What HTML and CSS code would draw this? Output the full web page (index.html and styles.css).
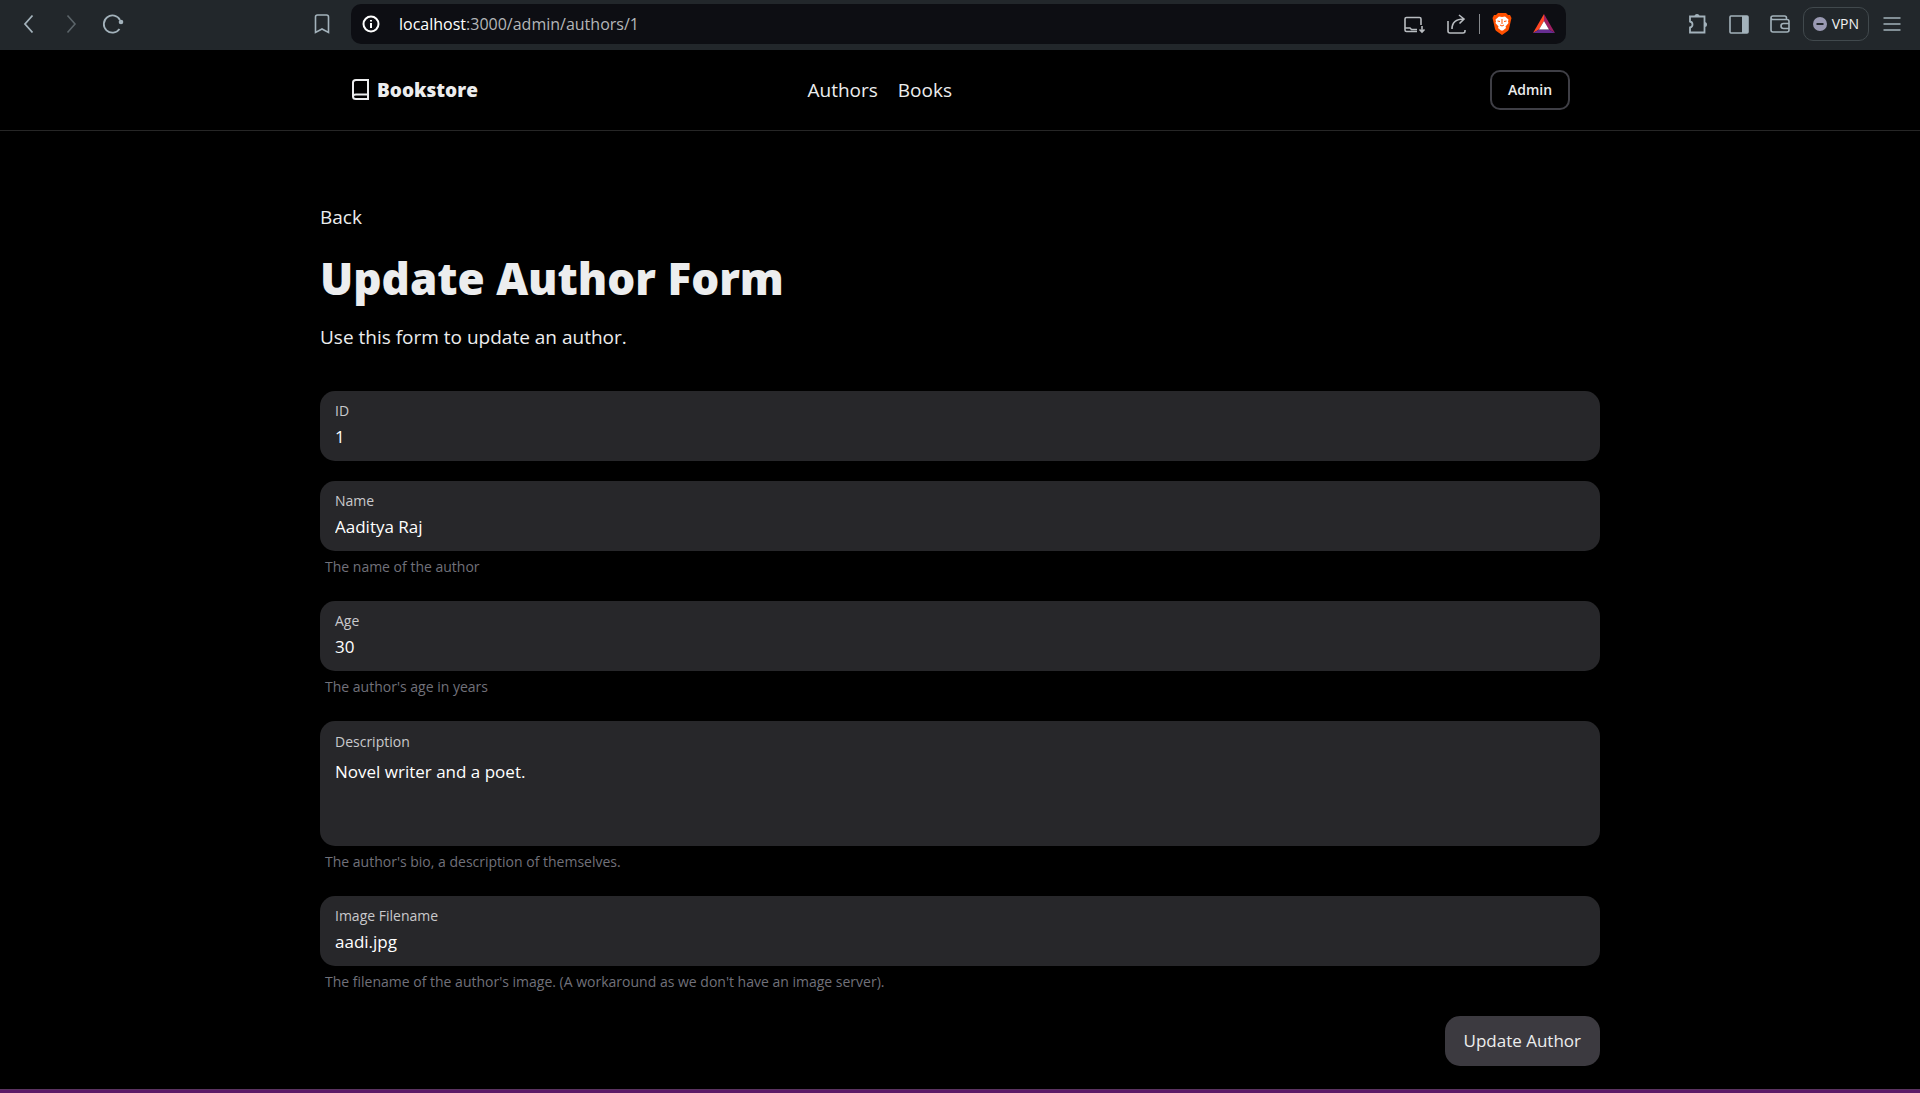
FILE: index.html
```html
<!DOCTYPE html>
<html lang="en">
<head>
<meta charset="utf-8">
<title>Update Author | Bookstore</title>
<link rel="stylesheet" href="styles.css">
</head>
<body>
<div class="toolbar">
  <div class="tools tools-left">
    <button class="tool" aria-label="Back"><svg width="24" height="24" viewBox="0 0 24 24" stroke-width="1.8"><path d="M15.500 3.500 8 12l7.500 8.500"/></svg></button>
    <button class="tool tool-off" aria-label="Forward"><svg width="24" height="24" viewBox="0 0 24 24" stroke-width="1.600"><path d="M8.500 3.500 16 12l-7.500 8.500"/></svg></button>
    <button class="tool" aria-label="Reload"><svg width="24" height="24" viewBox="0 0 24 24" stroke-width="1.800"><path d="M18.500 17a8.600 8.600 0 1 1 .5-9"/><circle class="fill" cx="20" cy="10" r="2.300"/></svg></button>
    <button class="tool tool-end" aria-label="Bookmark"><svg width="24" height="24" viewBox="0 0 24 24" stroke-width="1.600"><path d="M5.500 20.500V5q0-2 2-2h9q2 0 2 2v15.500L12 17z"/></svg></button>
  </div>
  <div class="address">
    <svg class="info" width="20" height="20" viewBox="0 0 20 20"><circle cx="10" cy="10" r="7.500"/><path d="M10 9v5M10 6v1.500"/></svg>
    <span class="url"><span class="host">localhost</span>:3000/admin/authors/1</span>
    <button class="tool light" aria-label="Install"><svg width="24" height="24" viewBox="0 0 24 24" stroke-width="1.600"><path d="M14 19.500H3.500q-1.500 0-1.500-1.500V7q0-1.500 1.500-1.500h13Q18 5.500 18 7v6M2 16h5l1.500 1.500H14M19 14v6M16.500 17.500 19 20l2.500-2.500"/></svg></button>
    <button class="tool light" aria-label="Share"><svg width="24" height="24" viewBox="0 0 24 24" stroke-width="1.600"><path d="M3 9v10q0 2 2 2h13q2 0 2-2v-1M7 17c0-6 4-10 12-10M14 3l5 4-4.500 4.500"/></svg></button>
    <span class="divider"></span>
    <button class="tool" aria-label="Shields"><svg width="24" height="24" viewBox="0 0 24 24"><path class="shield" d="m8 1h8l2 2h2l1.500 3-.5 2-2 9q-.5 1.500-2 2.500l-5 3.500-5-3.500q-1.500-1-2-2.500L3 8l-.5-2L4 3h2z"/><path class="lion" d="m12 5 3-.5 3.500 3-.5 2 .5 1.500-3 3.500.5 1.500-3 2.500h-2L8 16l.5-1.500-3-3.500.5-1.500-.5-2 3.500-3z"/><path class="mane" d="m7.500 9 2.500.5M16.500 9l-2.500.5M12 7v5M10 13l2 1 2-1"/></svg></button>
    <button class="tool" aria-label="Rewards"><svg width="24" height="24" viewBox="0 0 24 24"><path fill="#ff4724" stroke="none" d="M12 2 1 21l6-3.500L12 9z"/><path fill="#9e1f63" stroke="none" d="m12 2 11 19-6-3.500L12 9z"/><path fill="#662d91" stroke="none" d="m1 21 6-3.500h10l6 3.500z"/><path fill="#fff" stroke="none" d="m12 9 5 8.500H7z"/></svg></button>
  </div>
  <div class="tools tools-right">
    <button class="tool" aria-label="Extensions"><svg width="24" height="24" viewBox="0 0 24 24" stroke-width="1.800"><path d="M4 4.500h14.500v16H4v-5q2.500-.5 2.500-3T4 9.500z"/><path class="fill" d="M8.500 4.500a2.500 2.500 0 0 1 5 0zM18.500 10a2.500 2.500 0 0 1 0 5z"/></svg></button>
    <button class="tool" aria-label="Sidebar"><svg width="24" height="24" viewBox="0 0 24 24" stroke-width="1.600"><rect x="3" y="4" width="18" height="17" rx="1"/><path class="fill" d="M15 4h6v17h-6z"/></svg></button>
    <button class="tool" aria-label="Wallet"><svg width="24" height="24" viewBox="0 0 24 24" stroke-width="1.600"><path d="M18.500 7V6q0-2-2-2H5Q3 4 3 6v12q0 2 2 2h14q2 0 2-2V9.500q0-2-2-2H5q-2 0-2-1.500M21 11.500h-5.500a2.500 2.500 0 0 0 0 5H21"/></svg></button>
    <button class="vpn"><svg width="14" height="14" viewBox="0 0 14 14"><circle cx="7" cy="7" r="7"/><path d="M3.500 7h7"/></svg>VPN</button>
    <button class="tool" aria-label="Menu"><svg width="24" height="24" viewBox="0 0 24 24" stroke-width="1.600"><path d="M3.500 6h17M3.500 12h17M3.500 18h17"/></svg></button>
  </div>
</div>
<header class="site-header">
  <nav class="nav">
    <a class="brand" href="#"><svg width="20" height="24" viewBox="0 0 20 24"><path d="M6 2h12v19H6q-3 0-3-2.500V4.500Q3 2 6 2zM3 18.500q0-2 3-2h12"/></svg>Bookstore</a>
    <div class="links"><a href="#">Authors</a><a href="#">Books</a></div>
    <button class="admin">Admin</button>
  </nav>
</header>
<main class="page">
  <a class="back" href="#">Back</a>
  <h1>Update Author Form</h1>
  <p class="intro">Use this form to update an author.</p>
  <form class="form">
    <div class="group">
      <div class="field"><label for="id">ID</label><input id="id" value="1" readonly></div>
    </div>
    <div class="group">
      <div class="field"><label for="name">Name</label><input id="name" value="Aaditya Raj"></div>
      <p class="hint">The name of the author</p>
    </div>
    <div class="group">
      <div class="field"><label for="age">Age</label><input id="age" value="30"></div>
      <p class="hint">The author's age in years</p>
    </div>
    <div class="group">
      <div class="field area"><label for="bio">Description</label><textarea id="bio" rows="2">Novel writer and a poet.</textarea></div>
      <p class="hint">The author's bio, a description of themselves.</p>
    </div>
    <div class="group">
      <div class="field"><label for="image">Image Filename</label><input id="image" value="aadi.jpg"></div>
      <p class="hint">The filename of the author's image. (A workaround as we don't have an image server).</p>
    </div>
    <button class="submit" type="button">Update Author</button>
  </form>
</main>
<footer class="edge"></footer>
</body>
</html>
```
FILE: styles.css
```css
* { box-sizing: border-box; }
body {
  margin: 0;
  min-height: 100vh;
  display: flex;
  flex-direction: column;
  background: #000;
  color: #ecedee;
  font-family: "Open Sans", "Noto Sans", sans-serif;
  font-size: 19px;
  line-height: 30px;
}
button, input, textarea { font: inherit; color: inherit; }
button { background: none; border: 0; padding: 0; }
a { color: inherit; text-decoration: none; }
h1, p { margin: 0; }
svg { display: block; flex: none; }

.toolbar {
  display: grid;
  grid-template-columns: minmax(0, 351fr) minmax(0, 1215fr) minmax(0, 354fr);
  align-items: center;
  height: 50px;
  padding-bottom: 2px;
  background: #22272b;
  color: #a3b2bb;
}
.tools { display: flex; align-items: center; }
.tools-left { gap: 18px; padding: 0 17px; }
.tools-right { justify-content: flex-end; gap: 17px; padding-right: 16px; }
.tool svg { fill: none; stroke: currentColor; }
.tool .fill { fill: currentColor; stroke: none; }
.tool-off { color: #5b6469; }
.tool-end { margin-left: auto; }
.light { color: #b8bcc0; }
.address {
  display: flex;
  align-items: center;
  gap: 18px;
  height: 40px;
  padding: 0 10px;
  border-radius: 10px;
  background: #0d0e13;
}
.info { fill: none; stroke: #fff; stroke-width: 2; }
.url { flex: 1; font-size: 16px; color: #b4b6b9; }
.host { color: #fff; }
.divider { width: 1px; height: 20px; margin: 0 -8px; background: #85888c; }
.tool .shield { fill: #ff5000; stroke: none; }
.tool .lion { fill: #fff; stroke: none; }
.tool .mane { stroke: #ff5000; stroke-width: 1; }
.vpn {
  display: flex;
  align-items: center;
  gap: 5px;
  height: 34px;
  margin: 0 -6px;
  padding: 0 9px;
  border: 1px solid #41494d;
  border-radius: 10px;
  font-size: 14px;
  color: #f0f1f2;
}
.vpn svg { fill: #9a9ab3; }
.vpn path { stroke: #22272b; stroke-width: 2; }

.site-header { border-bottom: 1px solid #262626; }
.nav {
  display: grid;
  grid-template-columns: 3fr 3fr 2fr;
  align-items: center;
  max-width: 1280px;
  height: 80px;
  margin: 0 auto;
  padding: 0 30px;
}
.brand { display: flex; align-items: center; gap: 7px; font-weight: 800; }
.brand svg { fill: none; stroke: currentColor; stroke-width: 2; }
.links { display: flex; gap: 20px; }
.admin {
  justify-self: end;
  width: 80px;
  height: 40px;
  border: 2px solid #3f3f46;
  border-radius: 10px;
  font-size: 14px;
  font-weight: 600;
}

.page {
  width: 100%;
  max-width: 1280px;
  flex: 1;
  margin: 0 auto;
  padding: 71px 0 23px;
}
.back { display: block; }
h1 { margin: 16px 0 14px; font-size: 44px; line-height: 60px; font-weight: 800; }
.form { display: flex; flex-direction: column; gap: 20px; margin-top: 39px; }
.field {
  display: flex;
  flex-direction: column;
  height: 70px;
  padding: 9px 15px;
  border-radius: 15px;
  background: #27272a;
}
.field label { font-size: 14px; line-height: 22px; color: #c9c9cc; }
.field input, .field textarea {
  width: 100%;
  padding: 0;
  border: 0;
  outline: 0;
  background: none;
  resize: none;
  font-size: 17px;
  line-height: 30px;
  color: #fff;
}
.area { height: 125px; gap: 4px; padding-top: 10px; }
.hint { padding: 3px 5px 2px; font-size: 14px; line-height: 25px; color: #71717a; }
.submit {
  display: block;
  align-self: flex-end;
  height: 50px;
  padding: 0 19px;
  border-radius: 15px;
  background: #3c3a40;
  font-size: 17px;
}
.edge { height: 4px; background: #5c1a68; border-top: 1px solid #5a3360; }
```
